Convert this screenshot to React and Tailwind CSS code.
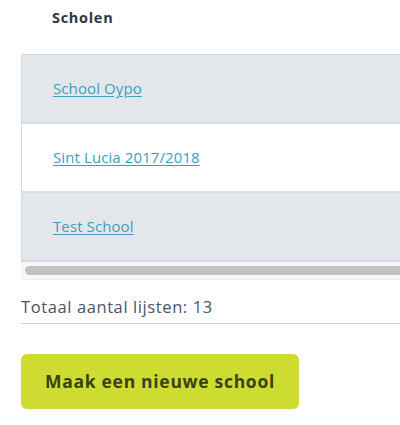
import React from 'react';

const schools = [
  { name: 'School Oypo', striped: true },
  { name: 'Sint Lucia 2017/2018', striped: false },
  { name: 'Test School', striped: true },
];

export default function App() {
  return (
    <div className="w-[400px] h-[425px] bg-white overflow-hidden" style={{ fontFamily: '"Open Sans", "Noto Sans", sans-serif' }}>
      <div className="pl-[21px]">
        {/* Header */}
        <div className="h-[54px] flex items-start pt-[7px] pl-[31px]">
          <span className="text-[14.5px] font-bold text-[#2d3748] tracking-[0.7px]">Scholen</span>
        </div>

        {/* Table */}
        <div className="w-[420px] border-l border-t border-[#d2d9e3]">
          {schools.map((s) => (
            <div
              key={s.name}
              className={`h-[69px] flex items-center pl-[31px] border-b-2 border-[#d8dee7] ${s.striped ? 'bg-[#e3e7ec]' : 'bg-white'}`}
            >
              <a href="#" className="text-[15px] text-[#3a9fbf] underline underline-offset-2 tracking-[0.1px]">
                {s.name}
              </a>
            </div>
          ))}
        </div>

        {/* Fake horizontal scrollbar */}
        <div className="h-[18px] bg-[#f7f7f7] border-b border-[#eeeeee] flex items-center pl-[4px]">
          <div className="h-[9px] w-full rounded-l-full bg-[#c1c1c1]" />
        </div>

        {/* Total */}
        <div className="h-[44px] flex items-end pb-[3px] border-b border-[#cbd3df]">
          <span className="text-[16.5px] text-[#4a5568] tracking-[0.6px]">Totaal aantal lijsten: 13</span>
        </div>

        {/* Button */}
        <button className="mt-[30px] w-[278px] h-[55px] rounded-[6px] bg-[#cedc31] flex items-center justify-center">
          <span className="text-[17.5px] font-bold text-[#3a4214] tracking-[0.7px]">Maak een nieuwe school</span>
        </button>
      </div>
    </div>
  );
}
